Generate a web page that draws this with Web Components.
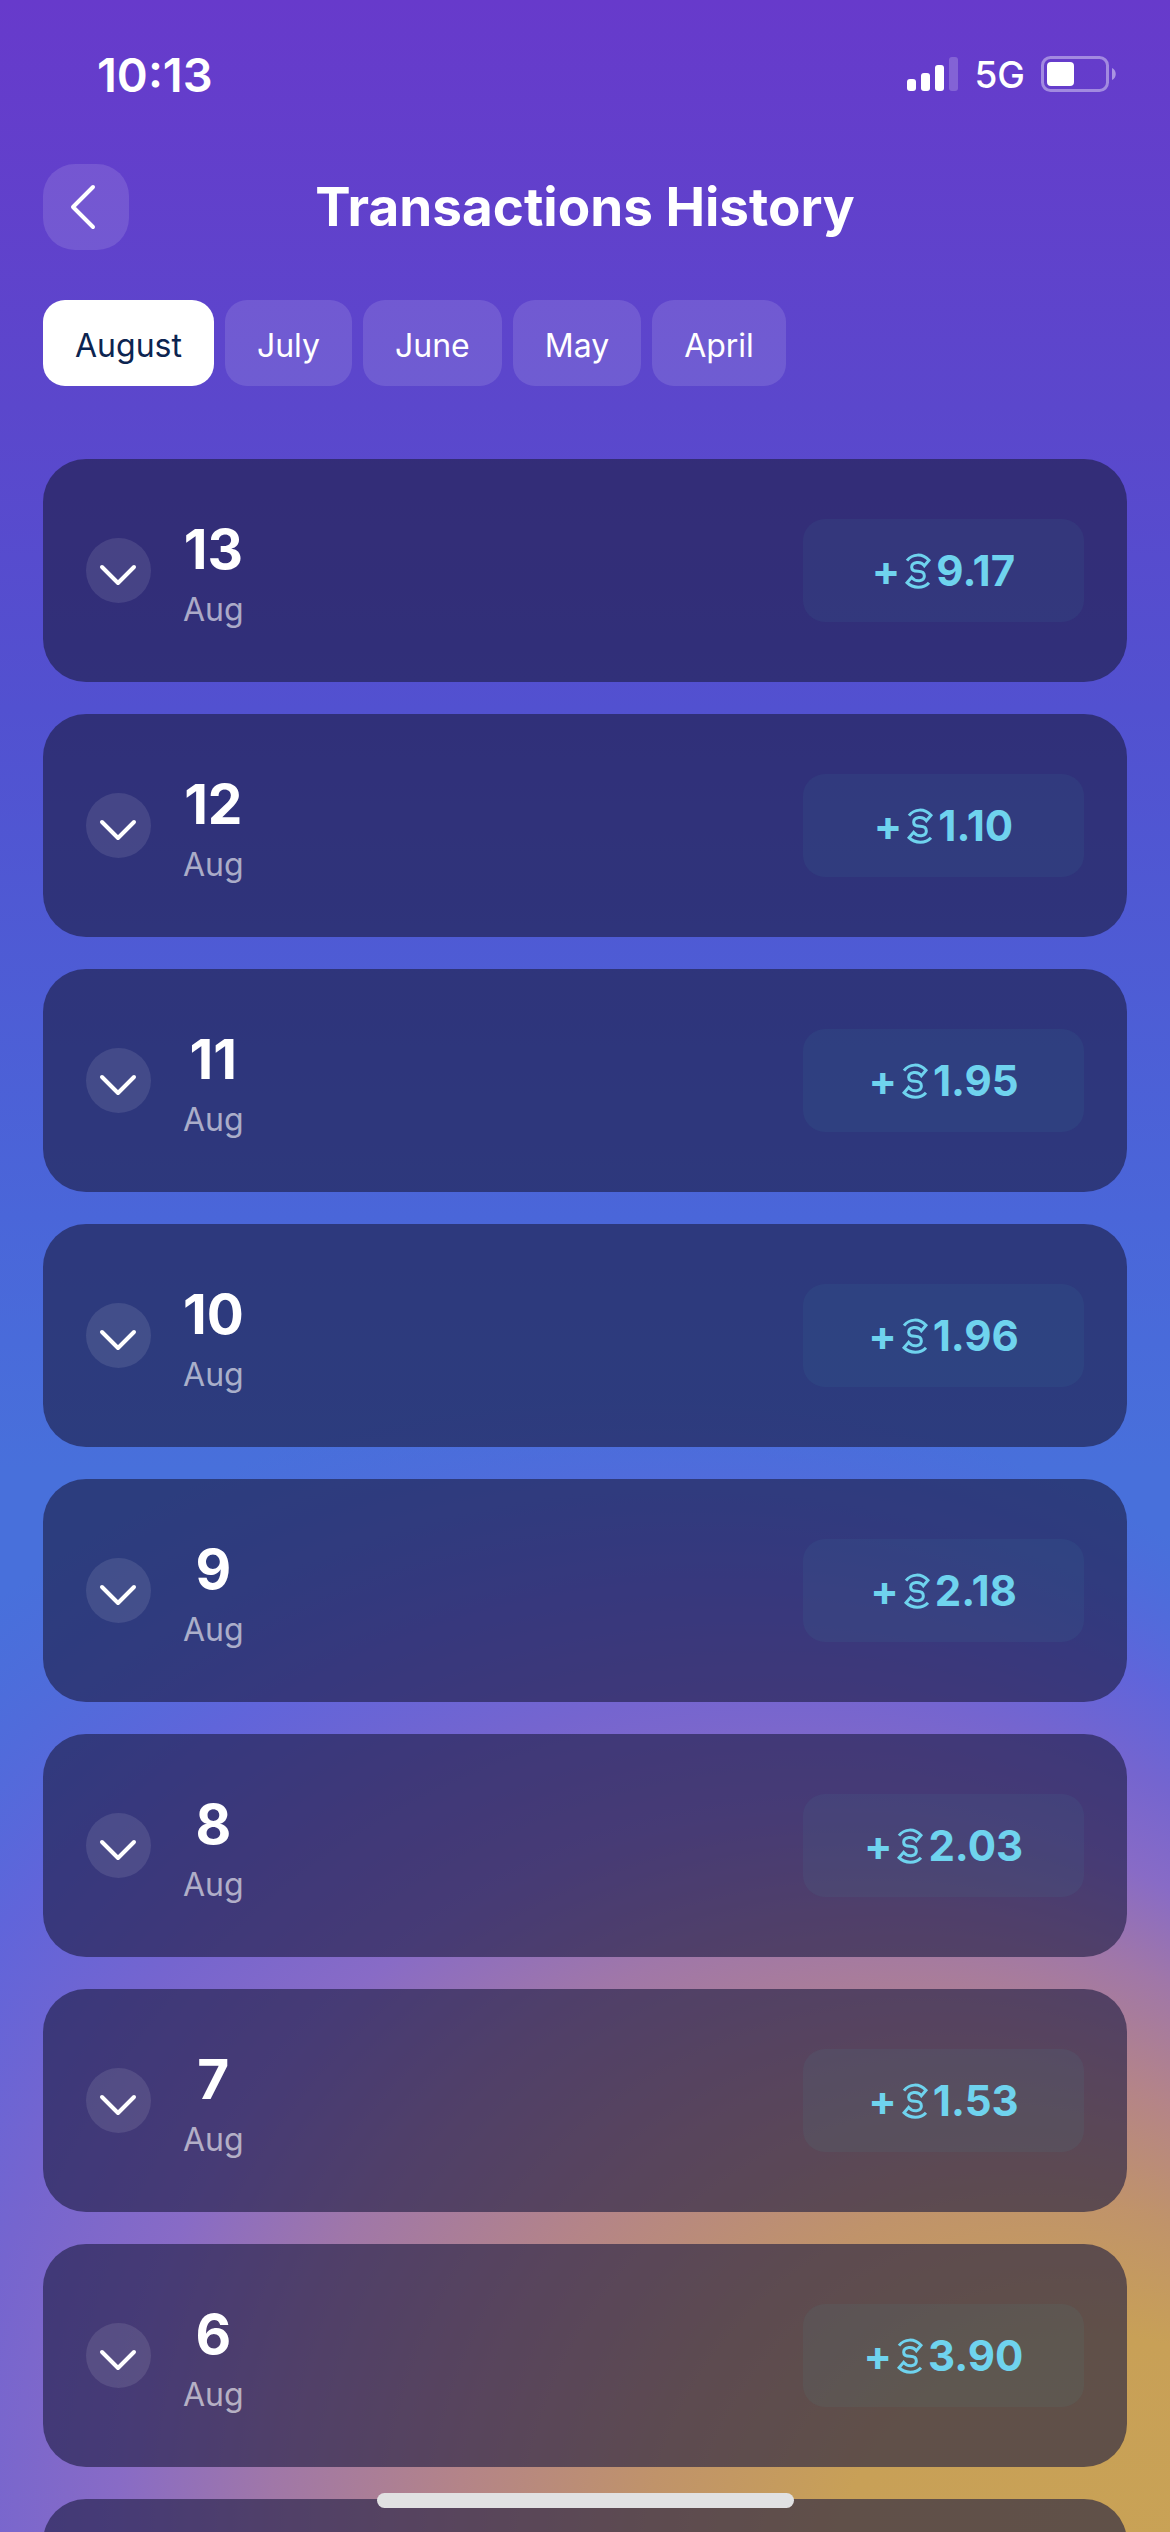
<!DOCTYPE html>
<html lang="en">
<head>
<meta charset="utf-8">
<meta name="viewport" content="width=device-width, initial-scale=1">
<title>Transactions History</title>
<style>
    body {
        margin: 0;
        font-family: Inter, "Liberation Sans", sans-serif;
        color: #fff;
        background: #5b47cc;
    }
</style>
</head>
<body>
<app-screen>
    <status-bar slot="status" time="10:13" network="5G"></status-bar>
    <page-header slot="header">Transactions History</page-header>
    <month-tabs slot="tabs" months="August,July,June,May,April" selected="August"></month-tabs>
    <day-card day="13" month="Aug" amount="9.17"></day-card>
    <day-card day="12" month="Aug" amount="1.10"></day-card>
    <day-card day="11" month="Aug" amount="1.95"></day-card>
    <day-card day="10" month="Aug" amount="1.96"></day-card>
    <day-card day="9" month="Aug" amount="2.18"></day-card>
    <day-card day="8" month="Aug" amount="2.03"></day-card>
    <day-card day="7" month="Aug" amount="1.53"></day-card>
    <day-card day="6" month="Aug" amount="3.90"></day-card>
    <day-card></day-card>
</app-screen>

<script>
class AppScreen extends HTMLElement {
    constructor() {
        super();
        this.attachShadow({mode: 'open'});
        this.shadowRoot.innerHTML = this.template;
    }

    get template() {
        return `
        <style>
            :host {
                display: grid;
                grid-template: minmax(0, 1fr) / minmax(0, 1fr);
                height: 100vh;
                overflow: hidden;
            }
            .backdrop, .content, .home {
                grid-area: 1 / 1;
            }
            .backdrop {
                width: 100%;
                height: 100%;
            }
            .content {
                display: flex;
                flex-direction: column;
                min-height: 0;
                z-index: 1;
            }
            main {
                flex: 1;
                min-height: 0;
                overflow: hidden;
                display: flex;
                flex-direction: column;
                gap: 32px;
                padding: 73px 43px 0;
            }
            .home {
                z-index: 2;
                align-self: end;
                justify-self: center;
                width: 417px;
                max-width: 60%;
                height: 15px;
                margin-bottom: 24px;
                border-radius: 8px;
                background: #e1e1e2;
            }
        </style>
        <svg class="backdrop" viewBox="0 0 1170 2532" preserveAspectRatio="none" aria-hidden="true">
            <defs>
                <linearGradient id="sky" x1="0" y1="0" x2="0" y2="1">
                    <stop offset="0" stop-color="#673acb"/>
                    <stop offset=".16" stop-color="#5b47cc"/>
                    <stop offset=".28" stop-color="#5251d0"/>
                    <stop offset=".48" stop-color="#4a66d9"/>
                    <stop offset=".58" stop-color="#4870db"/>
                    <stop offset="1" stop-color="#4870db"/>
                </linearGradient>
                <radialGradient id="glow" gradientUnits="userSpaceOnUse" cx="630" cy="2460" r="1070" fx="1250" fy="2650">
                    <stop offset="0" stop-color="#c9a355"/>
                    <stop offset=".25" stop-color="#c8a057"/>
                    <stop offset=".36" stop-color="#c0936a"/>
                    <stop offset=".47" stop-color="#b48488"/>
                    <stop offset=".58" stop-color="#a077a8"/>
                    <stop offset=".67" stop-color="#886bc6"/>
                    <stop offset=".76" stop-color="#7565cf"/>
                    <stop offset=".85" stop-color="#6264da" stop-opacity=".95"/>
                    <stop offset="1" stop-color="#5268dc" stop-opacity="0"/>
                </radialGradient>
            </defs>
            <rect width="1170" height="2532" fill="url(#sky)"/>
            <rect width="1170" height="2532" fill="url(#glow)"/>
        </svg>
        <div class="content">
            <slot name="status"></slot>
            <slot name="header"></slot>
            <slot name="tabs"></slot>
            <main><slot></slot></main>
        </div>
        <div class="home"></div>
        `;
    }
}

class StatusBar extends HTMLElement {
    connectedCallback() {
        if (!this.shadowRoot) {
            this.attachShadow({mode: 'open'});
            this.shadowRoot.innerHTML = this.template;
        }
        this.shadowRoot.querySelector('.time').textContent = this.getAttribute('time');
        this.shadowRoot.querySelector('.network').textContent = this.getAttribute('network');
    }

    get template() {
        return `
        <style>
            :host {
                display: flex;
                justify-content: space-between;
                align-items: center;
                height: 148px;
                padding: 0 54px 0 97px;
                box-sizing: border-box;
            }
            .time {
                font-size: 47px;
                font-weight: 600;
            }
            .right {
                display: flex;
                align-items: center;
                gap: 16px;
            }
            .network {
                font-size: 37px;
                font-weight: 500;
            }
            svg {
                display: block;
            }
        </style>
        <span class="time"></span>
        <div class="right">
            <svg width="51" height="34" viewBox="0 0 51 34" fill="#fff" aria-hidden="true">
                <rect x="0" y="22" width="9" height="12" rx="3"/>
                <rect x="14" y="16" width="9" height="18" rx="3"/>
                <rect x="28" y="8" width="9" height="26" rx="3"/>
                <rect x="42" y="0" width="9" height="34" rx="3" opacity=".2"/>
            </svg>
            <span class="network"></span>
            <svg width="75" height="36" viewBox="0 0 75 36" aria-hidden="true">
                <rect x="1.5" y="1.5" width="65" height="33" rx="8" fill="none" stroke="#fff" stroke-opacity=".4" stroke-width="3"/>
                <rect x="6" y="6" width="27" height="24" rx="4" fill="#fff"/>
                <path d="M71 12 C76 14 76 22 71 24 Z" fill="#fff" opacity=".45"/>
            </svg>
        </div>
        `;
    }
}

class PageHeader extends HTMLElement {
    constructor() {
        super();
        this.attachShadow({mode: 'open'});
        this.shadowRoot.innerHTML = this.template;
    }

    get template() {
        return `
        <style>
            :host {
                display: grid;
                grid-template-columns: 86px 1fr 86px;
                align-items: center;
                padding: 16px 43px 50px;
            }
            button {
                width: 86px;
                height: 86px;
                padding: 0;
                border: 0;
                border-radius: 32px;
                background: rgba(255, 255, 255, .12);
            }
            svg {
                display: block;
            }
            h1 {
                margin: 0;
                font-size: 53px;
                line-height: 66px;
                font-weight: 700;
                text-align: center;
                white-space: nowrap;
            }
        </style>
        <button type="button" aria-label="Back">
            <svg width="86" height="86" viewBox="0 0 86 86" fill="none" stroke="#fff" stroke-width="4" stroke-linecap="round" stroke-linejoin="round">
                <path d="M50 23 L30 43 L50 63"/>
            </svg>
        </button>
        <h1><slot></slot></h1>
        `;
    }
}

class MonthTabs extends HTMLElement {
    connectedCallback() {
        if (!this.shadowRoot) {
            this.attachShadow({mode: 'open'});
            this.shadowRoot.innerHTML = this.template;
        }
        const selected = this.getAttribute('selected');
        const nav = this.shadowRoot.querySelector('nav');
        nav.innerHTML = '';
        this.getAttribute('months').split(',').forEach(month => {
            const button = document.createElement('button');
            button.type = 'button';
            button.textContent = month;
            button.setAttribute('aria-pressed', month === selected);
            button.addEventListener('click', () => {
                nav.querySelectorAll('button').forEach(b => b.setAttribute('aria-pressed', b === button));
            });
            nav.appendChild(button);
        });
    }

    get template() {
        return `
        <style>
            :host {
                display: block;
                padding: 0 43px;
            }
            nav {
                display: flex;
                gap: 11px;
            }
            button {
                height: 86px;
                padding: 5px 32px 0;
                border: 0;
                border-radius: 22px;
                background: rgba(255, 255, 255, .12);
                color: #fff;
                font-family: inherit;
                font-size: 32px;
            }
            button[aria-pressed="true"] {
                background: #fff;
                color: #0c2450;
            }
        </style>
        <nav aria-label="Months"></nav>
        `;
    }
}

class DayCard extends HTMLElement {
    connectedCallback() {
        if (!this.shadowRoot) {
            this.attachShadow({mode: 'open'});
            this.shadowRoot.innerHTML = this.template;
        }
        if (!this.hasAttribute('day')) {
            this.shadowRoot.querySelector('.row').remove();
            return;
        }
        this.shadowRoot.querySelector('.day').textContent = this.getAttribute('day');
        this.shadowRoot.querySelector('.month').textContent = this.getAttribute('month');
        this.shadowRoot.querySelector('.value').textContent = this.getAttribute('amount');
    }

    get template() {
        return `
        <style>
            :host {
                display: block;
                flex: none;
                min-height: 223px;
                box-sizing: border-box;
                padding: 0 43px;
                border-radius: 43px;
                background: rgba(27, 27, 64, .6);
            }
            .row {
                display: flex;
                align-items: center;
                gap: 32px;
                min-height: 223px;
            }
            button {
                width: 65px;
                height: 65px;
                padding: 0;
                border: 0;
                border-radius: 50%;
                background: rgba(255, 255, 255, .1);
            }
            svg {
                display: block;
            }
            .date {
                display: flex;
                flex-direction: column;
                align-items: center;
                gap: 8px;
                padding-top: 4px;
            }
            .day {
                font-size: 55px;
                line-height: 66px;
                font-weight: 700;
            }
            .month {
                font-size: 32px;
                line-height: 40px;
                color: rgba(255, 255, 255, .6);
            }
            .amount {
                display: flex;
                align-items: center;
                justify-content: center;
                gap: 5px;
                width: 281px;
                height: 103px;
                margin-left: auto;
                border-radius: 22px;
                background: rgba(70, 180, 190, .07);
                color: #6fd3ee;
                font-size: 42px;
                font-weight: 700;
            }
        </style>
        <div class="row">
            <button type="button" aria-label="Show transactions">
                <svg width="65" height="65" viewBox="0 0 65 65" fill="none" stroke="#fff" stroke-width="4" stroke-linecap="round" stroke-linejoin="round">
                    <path d="M16 29 L32 45 L48 29"/>
                </svg>
            </button>
            <div class="date">
                <span class="day"></span>
                <span class="month"></span>
            </div>
            <div class="amount">
                <span>+</span>
                <svg width="26" height="36" viewBox="0 0 78 108" fill="none" stroke="currentColor" stroke-width="9" aria-hidden="true">
                    <path d="M6 23 C22 2 52 0 72 22 L58 38 C48 23 20 26 20 43 C20 55 32 55 39 55 C47 55 58 57 58 69 C58 86 32 88 20 73 L6 89 C24 107 56 107 72 89"/>
                </svg>
                <span class="value"></span>
            </div>
        </div>
        `;
    }
}

window.customElements.define('app-screen', AppScreen);
window.customElements.define('status-bar', StatusBar);
window.customElements.define('page-header', PageHeader);
window.customElements.define('month-tabs', MonthTabs);
window.customElements.define('day-card', DayCard);
</script>
</body>
</html>
